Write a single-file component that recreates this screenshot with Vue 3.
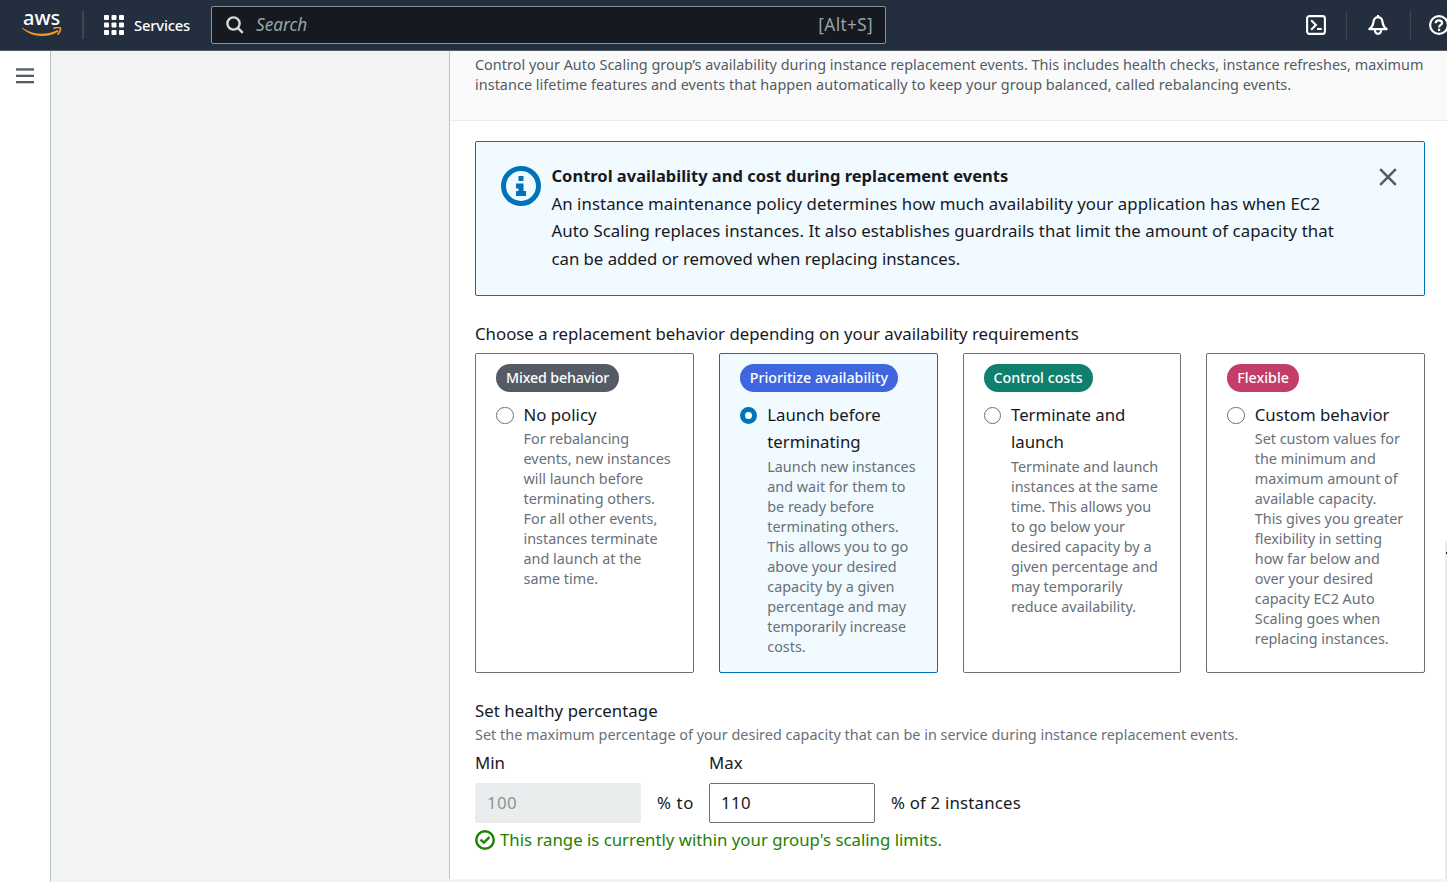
<script setup>
const tiles = [
  {
    badge: 'Mixed behavior', tone: 'grey', title: ['No policy'], selected: false,
    lines: ['For rebalancing', 'events, new instances', 'will launch before', 'terminating others.', 'For all other events,', 'instances terminate', 'and launch at the', 'same time.'],
  },
  {
    badge: 'Prioritize availability', tone: 'blue', title: ['Launch before', 'terminating'], selected: true,
    lines: ['Launch new instances', 'and wait for them to', 'be ready before', 'terminating others.', 'This allows you to go', 'above your desired', 'capacity by a given', 'percentage and may', 'temporarily increase', 'costs.'],
  },
  {
    badge: 'Control costs', tone: 'green', title: ['Terminate and', 'launch'], selected: false,
    lines: ['Terminate and launch', 'instances at the same', 'time. This allows you', 'to go below your', 'desired capacity by a', 'given percentage and', 'may temporarily', 'reduce availability.'],
  },
  {
    badge: 'Flexible', tone: 'red', title: ['Custom behavior'], selected: false,
    lines: ['Set custom values for', 'the minimum and', 'maximum amount of', 'available capacity.', 'This gives you greater', 'flexibility in setting', 'how far below and', 'over your desired', 'capacity EC2 Auto', 'Scaling goes when', 'replacing instances.'],
  },
]
</script>

<template>
  <div class="page">
    <header class="topbar">
      <div class="logo">
        <span class="logo-text">aws</span>
        <svg class="smile" width="40" height="12" viewBox="0 0 40 12">
          <path d="M0 0.400C6 4.800 12.500 6.800 19.500 6.800C25.500 6.800 31 5.500 35.800 3.100L36.600 4.500C31.500 7.700 25.800 9 19.800 9C12 9 5 6.200 0 1.300Z" fill="#f79a1f" />
          <path d="M31.300 1.500C34.500 0.300 37.500 0.300 38.400 0.900C39 2 37.700 5.600 35.600 7.600" fill="none" stroke="#f79a1f" stroke-width="1.600" stroke-linejoin="round" />
        </svg>
      </div>
      <span class="divider d1"></span>
      <svg class="grid-icon" width="20" height="20" viewBox="0 0 20 20" fill="#fff">
        <template v-for="r in 3" :key="r">
          <rect v-for="c in 3" :key="c" :x="(c - 1) * 7.5" :y="(r - 1) * 7.5" width="5" height="5" rx="0.9" />
        </template>
      </svg>
      <span class="services">Services</span>
      <div class="search">
        <svg width="18" height="18" viewBox="0 0 18 18" fill="none" stroke="#d5dbdb" stroke-width="2.400">
          <circle cx="7.500" cy="7.500" r="6.100" />
          <path d="M11.800 11.800L16.800 16.800" />
        </svg>
        <span class="placeholder">Search</span>
        <span class="shortcut">[Alt+S]</span>
      </div>
      <div class="tools">
        <svg width="20" height="20" viewBox="0 0 20 20" fill="none" stroke="#fff" stroke-width="2.100">
          <rect x="1.100" y="1.100" width="17.800" height="17.800" rx="2.300" />
          <path d="M5.200 5.300L9.900 10L5.200 14.700" />
          <path d="M11 14h4.700" />
        </svg>
        <span class="divider thin"></span>
        <svg width="20" height="20" viewBox="0 0 20 20" fill="none" stroke="#fff" stroke-width="2.200" stroke-linejoin="round">
          <path d="M10 2.200C7 2.300 5.700 4.500 5.400 7.400C5.100 10 3.800 12.400 1.300 14.100H18.700C16.200 12.400 14.900 10 14.600 7.400C14.300 4.500 13 2.300 10 2.200Z" />
          <path d="M10 0V2.500" />
          <path d="M6.900 14.500C6.900 17.500 8 18.800 10 18.800S13.100 17.500 13.100 14.500" />
        </svg>
        <span class="divider d3"></span>
        <svg width="20" height="20" viewBox="0 0 20 20" fill="none" stroke="#fff" stroke-width="2.200">
          <circle cx="10" cy="10" r="8.900" />
          <path d="M6.700 8.300C6.700 6.300 8.100 5.300 9.900 5.300C11.700 5.300 13.100 6.300 13.100 8C13.100 9.900 10.100 10.100 10.100 12.400" />
          <path d="M10.100 13.700V16" />
        </svg>
      </div>
    </header>

    <div class="body">
      <aside class="rail">
        <svg width="18" height="16" viewBox="0 0 18 16" fill="#545b64">
          <rect y="0.300" width="18" height="2.300" />
          <rect y="6.700" width="18" height="2.300" />
          <rect y="13" width="18" height="2.300" />
        </svg>
      </aside>
      <main class="main">
        <section class="panel">
          <div class="panel-head">
            <p class="intro">Control your Auto Scaling group’s availability during instance replacement events. This includes health checks, instance refreshes, maximum</p>
            <p class="intro second">instance lifetime features and events that happen automatically to keep your group balanced, called rebalancing events.</p>
          </div>
          <div class="panel-body">
            <div class="alert">
              <svg class="info" width="40" height="40" viewBox="0 0 40 40">
                <circle cx="20" cy="20" r="17.500" fill="none" stroke="#0073bb" stroke-width="5" />
                <path fill="#0073bb" d="M17.500 10h5v5h-5zM15 17.500h7.500v7.500H25v5H15v-5h2.500v-2.500H15z" />
              </svg>
              <div class="alert-text">
                <p class="alert-title">Control availability and cost during replacement events</p>
                <p class="wide">An instance maintenance policy determines how much availability your application has when EC2</p>
                <p class="wide">Auto Scaling replaces instances. It also establishes guardrails that limit the amount of capacity that</p>
                <p class="narrow">can be added or removed when replacing instances.</p>
              </div>
              <svg class="close" width="18" height="18" viewBox="0 0 18 18" stroke="#545b64" stroke-width="2.500">
                <path d="M1.200 1.200L16.800 16.800M16.800 1.200L1.200 16.800" />
              </svg>
            </div>

            <p class="label choose">Choose a replacement behavior depending on your availability requirements</p>
            <div class="tiles">
              <div v-for="t in tiles" :key="t.badge" class="tile" :class="{ selected: t.selected }">
                <span class="badge" :class="t.tone">{{ t.badge }}</span>
                <div class="option">
                  <span class="radio"></span>
                  <div class="option-text">
                    <p v-for="l in t.title" :key="l" class="title">{{ l }}</p>
                    <div class="descs">
                      <p v-for="l in t.lines" :key="l" class="desc">{{ l }}</p>
                    </div>
                  </div>
                </div>
              </div>
            </div>

            <p class="label healthy">Set healthy percentage</p>
            <p class="hint">Set the maximum percentage of your desired capacity that can be in service during instance replacement events.</p>
            <div class="range">
              <div class="field">
                <span class="label">Min</span>
                <div class="input disabled">100</div>
              </div>
              <span class="unit to">% to</span>
              <div class="field">
                <span class="label">Max</span>
                <div class="input">110</div>
              </div>
              <span class="unit of">% of 2 instances</span>
            </div>
            <div class="success">
              <svg width="20" height="20" viewBox="0 0 20 20" fill="none" stroke="#1d8102" stroke-width="2.400">
                <circle cx="10" cy="10" r="8.750" />
                <path d="M5.500 9.700L8.900 12.700L14.400 7.200" />
              </svg>
              <span>This range is currently within your group's scaling limits.</span>
            </div>
          </div>
        </section>
        <div class="edge"><span></span></div>
      </main>
    </div>
  </div>
</template>

<style>
body {
  overflow: hidden;
}
</style>

<style scoped>
.page {
  width: 1447px;
  height: 882px;
  overflow: hidden;
  display: flex;
  flex-direction: column;
  font-family: "Noto Sans", "Open Sans", sans-serif;
  font-size: 16.8px;
  line-height: 27.5px;
  color: #16191f;
  background: #f2f3f3;
}
.page * { box-sizing: border-box; }
p { margin: 0; white-space: nowrap; }
svg { display: block; flex: none; }

.topbar {
  flex: none;
  height: 51px;
  background: #232f3e;
  border-bottom: 1px solid #545b64;
  display: flex;
  align-items: center;
  color: #fff;
}
.logo {
  width: 40px;
  height: 28px;
  margin-left: 22px;
  display: flex;
  flex: none;
  flex-direction: column;
}
.logo-text {
  height: 17px;
  font-size: 20px;
  font-weight: 500;
  line-height: 14px;
  letter-spacing: 0;
  padding-left: 1px;
}
.divider { width: 2px; height: 28px; background: #414750; flex: none; }
.d1 { margin: 0 20px 0 20px; }
.services {
  margin-left: 10px;
  width: 67px;
  flex: none;
  padding-top: 2px;
  font-size: 14.8px;
  font-weight: 500;
  letter-spacing: -0.2px;
}
.search {
  margin-left: 10px;
  width: 675px;
  flex: none;
  height: 38px;
  border: 1px solid #879596;
  border-radius: 2px;
  background: #16191f;
  display: flex;
  align-items: center;
  padding: 0 12px 0 14px;
  font-size: 17.2px;
  color: #95a5a6;
}
.placeholder { margin-left: 12px; font-style: italic; }
.shortcut { margin-left: auto; letter-spacing: 0.35px; }
.tools { margin-left: 420px; display: flex; align-items: center; flex: none; }
.thin { width: 1px; margin: 0 21px 0 20px; }
.d3 { width: 1px; height: 30px; margin: 0 18px 0 22px; }

.body { flex: 1; display: flex; min-height: 0; }
.rail {
  width: 51px;
  flex: none;
  background: #fff;
  border-right: 1px solid #b9c2c3;
  padding: 17px 0 0 16px;
}
.main { flex: 1; display: flex; min-width: 0; padding-left: 398px; position: relative; }
.panel {
  width: 998px;
  flex: none;
  height: 828px;
  background: #fff;
  border-left: 1px solid #c1c5c5;
}
.panel-head {
  height: 70px;
  background: #fafafa;
  border-bottom: 1px solid #eaeded;
  padding: 4px 0 0 25px;
}
.intro, .desc, .hint {
  font-size: 14.4px;
  line-height: 20px;
}
.intro { color: #545b64; letter-spacing: 0.024px; }
.second { letter-spacing: 0.045px; }
.panel-body { padding: 20px 22px 0 25px; }
.alert {
  width: 950px;
  height: 155px;
  border: 1px solid #0073bb;
  border-radius: 2px;
  background: #f1faff;
  display: flex;
  padding: 20px 27px 0 25px;
}
.info { margin-top: 4px; }
.alert-text { margin-left: 10.5px; flex: 1; }
.alert-title { font-size: 16.5px; font-weight: 700; }
.wide { letter-spacing: 0.055px; }
.narrow { letter-spacing: -0.03px; }
.close { margin-top: 6px; }
.choose { margin-top: 24px; }
.tiles {
  margin-top: 5.5px;
  width: 950px;
  display: grid;
  grid-template-columns: repeat(4, 1fr);
  gap: 25px;
}
.tile {
  height: 320px;
  border: 1px solid #687078;
  border-radius: 2px;
  padding: 10px 0 0 20px;
}
.selected { border-color: #0073bb; background: #f1faff; }
.badge {
  display: block;
  width: fit-content;
  height: 28px;
  line-height: 27px;
  padding: 0 10px;
  border-radius: 14px;
  color: #fff;
  font-size: 14.25px;
  font-weight: 500;
}
.grey { background: #545b64; letter-spacing: -0.15px; }
.blue { background: #4066df; }
.green { background: #0f7f6e; }
.red { background: #c33d69; }
.option { display: flex; margin-top: 8.5px; }
.radio {
  width: 17.5px;
  height: 17.5px;
  margin-top: 6px;
  flex: none;
  border: 1.5px solid #687078;
  border-radius: 50%;
  background: #fff;
}
.selected .radio { border: 5.500px solid #0073bb; }
.option-text { margin-left: 10px; }
.descs { padding-top: 1px; }
.desc { color: #687078; letter-spacing: 0; }
.healthy { margin-top: 24px; letter-spacing: 0.05px; }
.hint { color: #687078; letter-spacing: 0.018px; }
.range { display: flex; margin-top: 4px; align-items: flex-end; }
.field { width: 166px; display: flex; flex-direction: column; }
.input {
  margin-top: 6.5px;
  height: 40px;
  line-height: 38px;
  padding-left: 11px;
  border: 1px solid #687078;
  border-radius: 2px;
  letter-spacing: 0.4px;
}
.disabled { background: #eaeded; border-color: #eaeded; color: #879596; }
.unit { height: 40px; line-height: 39px; letter-spacing: 0.2px; white-space: nowrap; }
.to { width: 68px; padding-left: 16px; letter-spacing: 0.6px; }
.of { padding-left: 16px; }
.success {
  margin-top: 5px;
  display: flex;
  align-items: center;
  color: #1d8102;
}
.success span { margin: -2px 0 0 5px; }
.edge {
  position: absolute;
  right: 0;
  top: 490px;
  width: 2px;
  height: 338px;
  background: #e9ebeb;
}
.edge span { display: block; margin: 11px 0 0 1px; width: 1px; height: 2px; background: #16191f; }
</style>
